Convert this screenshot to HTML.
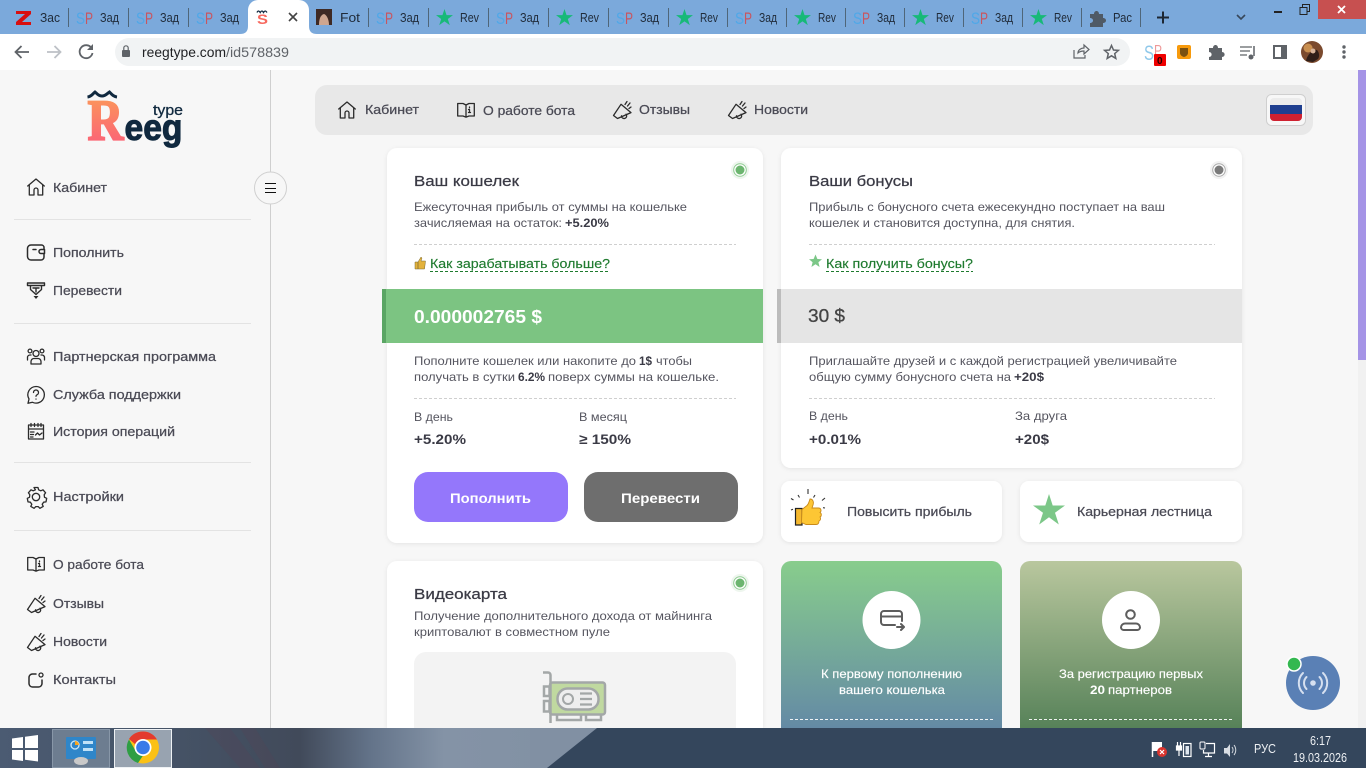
<!DOCTYPE html>
<html lang="ru">
<head>
<meta charset="utf-8">
<title>Reegtype</title>
<style>
html,body{margin:0;padding:0;width:1366px;height:768px;overflow:hidden;background:#f7f7f7}
svg{display:block}
text{font-family:"Liberation Sans","DejaVu Sans",sans-serif}
.s{font-size:13px;fill:#4a4a55;stroke:#4a4a55;stroke-width:.25}
.h{font-size:15px;fill:#3a3a45;stroke:#3a3a45;stroke-width:.25}
.p{font-size:12px;fill:#55555f}
.b{font-size:12px;font-weight:700;fill:#3a3a45}
.v{font-size:14px;font-weight:700;fill:#3a3a45}
.l{font-size:13px;fill:#1e7a2e;stroke:#1e7a2e;stroke-width:.15}
.t{font-size:13px;fill:#1f2a38}
.w{font-size:12px;fill:#fff;stroke:#fff;stroke-width:.15}
.i{fill:none;stroke:#2b2b2b;stroke-width:1.3;stroke-linecap:round;stroke-linejoin:round}
.sp1{font-size:17px;fill:#4fa8e8}
.sp2{font-size:17px;fill:#c8555f}
</style>
</head>
<body>
<svg width="1366" height="768" viewBox="0 0 1366 768" xmlns="http://www.w3.org/2000/svg">
<defs>
<linearGradient id="lg" x1="0" y1="0" x2="0" y2="1"><stop offset="0" stop-color="#fba055"/><stop offset="1" stop-color="#fb5a7c"/></linearGradient>
<linearGradient id="g1" x1="0" y1="0" x2="0" y2="1"><stop offset="0" stop-color="#88cd8c"/><stop offset="1" stop-color="#648aa5"/></linearGradient>
<linearGradient id="g2" x1="0" y1="0" x2="0" y2="1"><stop offset="0" stop-color="#b9c79e"/><stop offset="1" stop-color="#578259"/></linearGradient>
<linearGradient id="tb" x1="0" y1="0" x2="1" y2="0"><stop offset="0" stop-color="#4b5b72"/><stop offset=".25" stop-color="#465468"/><stop offset=".5" stop-color="#414a5a"/><stop offset=".62" stop-color="#64748a"/><stop offset=".74" stop-color="#8493a6"/><stop offset="1" stop-color="#8190a3"/></linearGradient>
<filter id="sh" x="-5%" y="-5%" width="110%" height="110%"><feDropShadow dx="0" dy="1" stdDeviation="2" flood-color="#000" flood-opacity=".08"/></filter>
<symbol id="home" viewBox="0 0 18 18" overflow="visible"><path class="i" d="M.7 8 9 1l8.300 7M2.300 7v10H7v-5a2 2 0 0 1 4 0v5h4.700V7"/></symbol>
<symbol id="book" viewBox="0 0 18 18" overflow="visible"><path class="i" d="M.7 2.500h5.300l3 1.500 3-1.500h5.300V15H12l-3 1.200L6 15H.7zM9 4v12M12.500 6v.8M11.500 8.500h1v3M11.500 11.500h2"/></symbol>
<symbol id="horn" viewBox="0 0 18 18" overflow="visible"><path class="i" d="M8 3.300 18 11.600 4.500 17.500.5 14.500zM8.500 14.800a2.600 2.600 0 1 0 4.500-1.600M14 .5l-2 3M17 2l-2.500 3M18 6l-2 1.500"/></symbol>
<symbol id="star" viewBox="0 0 20 20"><path d="M10 0l2.400 7.200H20l-6.100 4.500 2.300 7.300L10 14.500 3.800 19l2.300-7.300L0 7.200h7.600z" fill="#17b978"/></symbol>
</defs>

<!-- page background -->
<rect width="1366" height="768" fill="#f7f7f7"/>

<!-- browser tab strip -->
<rect width="1366" height="34" fill="#7ba9db"/>
<rect y="34" width="1366" height="36" fill="#fff"/>
<g stroke="#4f6679" stroke-width="1"><path d="M68.500 8v19M128.500 8v19M188.500 8v19M368.500 8v19M428.500 8v19M488.500 8v19M548.500 8v19M608.500 8v19M668.500 8v19M727.500 8v19M786.500 8v19M845.500 8v19M904.500 8v19M963.500 8v19M1022.500 8v19M1081.500 8v19M1140.500 8v19"/></g>
<path d="M16 11h15v3l-9 8h9v3H16v-3l9-8h-9z" fill="#d80f10"/>
<path d="M240 34c5 0 8-2 8-8V10a10 10 0 0 1 10-10h41a10 10 0 0 1 10 10v16c0 6 3 8 8 8z" fill="#fff"/>
<g>
<text class="sp1" x="76" y="24" textLength="9" lengthAdjust="spacingAndGlyphs">S</text><text class="sp2" x="85" y="24" textLength="8" lengthAdjust="spacingAndGlyphs">P</text>
<text class="sp1" x="136" y="24" textLength="9" lengthAdjust="spacingAndGlyphs">S</text><text class="sp2" x="145" y="24" textLength="8" lengthAdjust="spacingAndGlyphs">P</text>
<text class="sp1" x="196" y="24" textLength="9" lengthAdjust="spacingAndGlyphs">S</text><text class="sp2" x="205" y="24" textLength="8" lengthAdjust="spacingAndGlyphs">P</text>
<text class="sp1" x="376" y="24" textLength="9" lengthAdjust="spacingAndGlyphs">S</text><text class="sp2" x="385" y="24" textLength="8" lengthAdjust="spacingAndGlyphs">P</text>
<text class="sp1" x="496" y="24" textLength="9" lengthAdjust="spacingAndGlyphs">S</text><text class="sp2" x="505" y="24" textLength="8" lengthAdjust="spacingAndGlyphs">P</text>
<text class="sp1" x="616" y="24" textLength="9" lengthAdjust="spacingAndGlyphs">S</text><text class="sp2" x="625" y="24" textLength="8" lengthAdjust="spacingAndGlyphs">P</text>
<text class="sp1" x="735" y="24" textLength="9" lengthAdjust="spacingAndGlyphs">S</text><text class="sp2" x="744" y="24" textLength="8" lengthAdjust="spacingAndGlyphs">P</text>
<text class="sp1" x="853" y="24" textLength="9" lengthAdjust="spacingAndGlyphs">S</text><text class="sp2" x="862" y="24" textLength="8" lengthAdjust="spacingAndGlyphs">P</text>
<text class="sp1" x="971" y="24" textLength="9" lengthAdjust="spacingAndGlyphs">S</text><text class="sp2" x="980" y="24" textLength="8" lengthAdjust="spacingAndGlyphs">P</text>
</g>
<use href="#star" x="436" y="9" width="17" height="17"/>
<use href="#star" x="556" y="9" width="17" height="17"/>
<use href="#star" x="676" y="9" width="17" height="17"/>
<use href="#star" x="794" y="9" width="17" height="17"/>
<use href="#star" x="912" y="9" width="17" height="17"/>
<use href="#star" x="1030" y="9" width="17" height="17"/>
<g class="tabs">
<text class="t" x="40" y="22" textLength="20" lengthAdjust="spacingAndGlyphs">Зас</text>
<text class="t" x="100" y="22" textLength="19" lengthAdjust="spacingAndGlyphs">Зад</text>
<text class="t" x="160" y="22" textLength="19" lengthAdjust="spacingAndGlyphs">Зад</text>
<text class="t" x="220" y="22" textLength="19" lengthAdjust="spacingAndGlyphs">Зад</text>
<text class="t" x="340" y="22" textLength="20" lengthAdjust="spacingAndGlyphs">Fot</text>
<text class="t" x="400" y="22" textLength="19" lengthAdjust="spacingAndGlyphs">Зад</text>
<text class="t" x="460" y="22" textLength="19" lengthAdjust="spacingAndGlyphs">Rev</text>
<text class="t" x="520" y="22" textLength="19" lengthAdjust="spacingAndGlyphs">Зад</text>
<text class="t" x="580" y="22" textLength="19" lengthAdjust="spacingAndGlyphs">Rev</text>
<text class="t" x="640" y="22" textLength="19" lengthAdjust="spacingAndGlyphs">Зад</text>
<text class="t" x="700" y="22" textLength="18" lengthAdjust="spacingAndGlyphs">Rev</text>
<text class="t" x="759" y="22" textLength="18" lengthAdjust="spacingAndGlyphs">Зад</text>
<text class="t" x="818" y="22" textLength="18" lengthAdjust="spacingAndGlyphs">Rev</text>
<text class="t" x="877" y="22" textLength="18" lengthAdjust="spacingAndGlyphs">Зад</text>
<text class="t" x="936" y="22" textLength="18" lengthAdjust="spacingAndGlyphs">Rev</text>
<text class="t" x="995" y="22" textLength="18" lengthAdjust="spacingAndGlyphs">Зад</text>
<text class="t" x="1054" y="22" textLength="18" lengthAdjust="spacingAndGlyphs">Rev</text>
<text class="t" x="1113" y="22" textLength="19" lengthAdjust="spacingAndGlyphs">Рас</text>
</g>
<!-- active tab favicon and close -->
<path d="M257 12.500c1-2 2-2 3.200 0 1.200-2 2.200-2 3.300 0 1.200-2 2.200-2 3.500 0" fill="none" stroke="#10293f" stroke-width="1.300"/>
<text x="257" y="24" font-size="14" font-weight="700" fill="#f7695f" textLength="11" lengthAdjust="spacingAndGlyphs">S</text>
<path d="M289 13l8 8M297 13l-8 8" stroke="#444" stroke-width="1.600"/>
<!-- photo favicon -->
<rect x="316" y="9" width="16" height="16" fill="#3f2a24"/><path d="M319 25c0-5 1-10 5-11 3 1 5 6 5 11z" fill="#cfa68f"/>
<!-- puzzle tab -->
<path d="M1090 14h4c0-4 5-4 5 0h4v4c4 0 4 5 0 5v4h-13v-4c4 0 4-5 0-5z" fill="#4f5a66"/>
<!-- window controls -->
<path d="M1157 17.500h12M1163 11.500v12" stroke="#1d2733" stroke-width="2"/>
<path d="M1237 15l4 4 4-4" fill="none" stroke="#37475a" stroke-width="1.600"/>
<rect x="1274" y="11" width="8" height="2" fill="#222"/>
<path d="M1300 7.500h7v7h-7zM1302.500 7V4.500h7v7H1307" fill="none" stroke="#222" stroke-width="1"/>
<rect x="1318" width="48" height="19" fill="#c75050"/>
<path d="M1338 6l7 7M1345 6l-7 7" stroke="#fff" stroke-width="1.800"/>

<!-- toolbar -->
<path d="M29 52H16M21.500 46 15.500 52l6 6" fill="none" stroke="#5f6368" stroke-width="1.800"/>
<path d="M47 52h13M54.500 46l6 6-6 6" fill="none" stroke="#bdc1c6" stroke-width="1.800"/>
<path d="M91.500 48a6.500 6.500 0 1 0 1 5" fill="none" stroke="#5f6368" stroke-width="1.800"/><path d="M93 44v6h-6z" fill="#5f6368"/>
<rect x="115" y="38" width="1015" height="28" rx="14" fill="#f1f3f4"/>
<rect x="122" y="50" width="8" height="7" rx="1" fill="#5f6368"/><path d="M123.800 50v-2a2.200 2.200 0 0 1 4.400 0v2" fill="none" stroke="#5f6368" stroke-width="1.200"/>
<text x="142" y="57" font-size="14" fill="#202124" textLength="84" lengthAdjust="spacingAndGlyphs">reegtype.com</text>
<text x="226" y="57" font-size="14" fill="#5f6368" textLength="63" lengthAdjust="spacingAndGlyphs">/id578839</text>
<path d="M1074 50v8h11v-3M1078 53c0-3 3-5 6-5v-3l5 4.500-5 4.500v-3c-2.500 0-4.500 .5-6 2z" fill="none" stroke="#5f6368" stroke-width="1.200"/>
<path d="M1111.500 45.500l2 4.500 4.900.4-3.700 3.200 1.100 4.800-4.300-2.600-4.300 2.600 1.100-4.800-3.700-3.200 4.900-.4z" fill="none" stroke="#5f6368" stroke-width="1.500"/>
<text x="1144" y="60" font-size="21" fill="#8fc8ea" textLength="10" lengthAdjust="spacingAndGlyphs">S</text><text x="1154" y="56" font-size="16" fill="#e99" textLength="8" lengthAdjust="spacingAndGlyphs">P</text>
<rect x="1154" y="54" width="12" height="12" rx="1" fill="#f00000"/><text x="1157" y="64" font-size="10" fill="#220000" font-weight="700">0</text>
<rect x="1177" y="45" width="14" height="14" rx="2" fill="#f79a0c"/><path d="M1180 48h8v5c0 2-2 3.500-4 4-2-.5-4-2-4-4z" fill="#7a5010"/>
<path d="M1209 48h4c0-4 5-4 5 0h4v4c3.500 0 3.500 5 0 5v3h-13v-3c3.500 0 3.500-5 0-5z" fill="#5f6368"/>
<path d="M1240 47h12M1240 51h10M1240 55h7" stroke="#5f6368" stroke-width="1.300"/><path d="M1254 46v10" stroke="#5f6368" stroke-width="1.500"/><circle cx="1251" cy="57" r="2.500" fill="#5f6368"/>
<rect x="1274" y="46" width="12" height="12" fill="none" stroke="#5f6368" stroke-width="2"/><rect x="1281" y="46" width="6" height="12" fill="#5f6368"/>
<circle cx="1312" cy="52" r="11" fill="#7b4a2e"/><circle cx="1308" cy="48" r="4.500" fill="#c98f50"/><path d="M1306 61c1-7 8-12 11-11 2 2 3 6 1 9l-5 3z" fill="#2f1e18"/><circle cx="1313" cy="51" r="2.500" fill="#d8b49a"/>
<g fill="#5f6368"><circle cx="1344" cy="47" r="1.700"/><circle cx="1344" cy="52" r="1.700"/><circle cx="1344" cy="57" r="1.700"/></g>

<!-- sidebar -->
<rect x="270" y="70" width="1" height="658" fill="#cfcfcf"/>
<path d="M87.500 97c4-.5 5-3 7.500-5 2.500 2 3.500 4 7 4 3.500 0 4.500-2 7.500-4 2 2 3.500 4.500 7.500 5" fill="none" stroke="#10293f" stroke-width="3"/>
<text x="87.500" y="139.500" font-size="58" font-weight="700" fill="url(#lg)" stroke="url(#lg)" stroke-width="1.800" textLength="36" lengthAdjust="spacingAndGlyphs" style="font-family:'Liberation Serif',serif">R</text>
<text x="124.500" y="140" font-size="37" font-weight="700" fill="#10293f" stroke="#10293f" stroke-width="1" textLength="58" lengthAdjust="spacingAndGlyphs">eeg</text>
<text x="153" y="115" font-size="15" fill="#10293f" stroke="#10293f" stroke-width=".3" textLength="30" lengthAdjust="spacingAndGlyphs">type</text>

<use href="#home" x="27" y="178" width="18" height="18"/>
<text class="s" x="53" y="192" textLength="54" lengthAdjust="spacingAndGlyphs">Кабинет</text>
<circle cx="270.500" cy="188" r="16" fill="#f7f7f7" stroke="#d0d0d0"/>
<path d="M265 183.500h11M265 188.500h11M265 192.500h11" stroke="#111" stroke-width="1"/>
<g fill="#e3e3e3"><rect x="14" y="219" width="237" height="1"/><rect x="14" y="323" width="237" height="1"/><rect x="14" y="462" width="237" height="1"/><rect x="14" y="530" width="237" height="1"/></g>

<path class="i" style="stroke-width:1.500" d="M44 249v-1.500a2.500 2.500 0 0 0-2.500-2.500H31a3.500 3.500 0 0 0-3.500 3.500v8a3.500 3.500 0 0 0 3.500 3.500h10a3 3 0 0 0 3-3v-3M33 249.500h3M44.500 249.500H41a2 2 0 0 0 0 4h3.500z"/>
<text class="s" x="53" y="257" textLength="71" lengthAdjust="spacingAndGlyphs">Пополнить</text>
<path class="i" style="stroke-width:1.400" d="M27.500 283h17v2.500h-17zM30.500 285.500v4l5.500 5 5.500-5v-4M33 288h6M36 288v4"/><path d="M33.500 296h5l-2.500 3z" fill="#2b2b2b"/>
<text class="s" x="53" y="295" textLength="69" lengthAdjust="spacingAndGlyphs">Перевести</text>
<circle class="i" cx="36" cy="353.500" r="3"/><circle class="i" cx="30" cy="351" r="1.900"/><circle class="i" cx="42" cy="351" r="1.900"/>
<path class="i" d="M31 364v-2.500a3 3 0 0 1 3-3h4a3 3 0 0 1 3 3V364zM27.500 360v-2.500A2.500 2.500 0 0 1 30 355h1M44.500 360v-2.500A2.500 2.500 0 0 0 42 355h-1"/>
<text class="s" x="53" y="361" textLength="163" lengthAdjust="spacingAndGlyphs">Партнерская программа</text>
<path class="i" d="M36 386.500a8.300 8.300 0 1 1-3.500 15.800l-4.500 1 1-4.300a8.300 8.300 0 0 1 7-12.500z"/><path class="i" d="M33.500 392.500a2.500 2.500 0 1 1 3.500 2.300c-.7.400-1 .8-1 1.500M36 399v.1"/>
<text class="s" x="53" y="399" textLength="128" lengthAdjust="spacingAndGlyphs">Служба поддержки</text>
<path class="i" d="M28.500 425h15v14h-15zM28.500 429h15M31 423.500v3M34.500 423.500v3M38 423.500v3M41 423.500v3M30.500 432h3.500M30.500 434.500h3M30.500 437h2.500M35.500 435l2-2 2 2 2.500-2"/>
<text class="s" x="53" y="436" textLength="122" lengthAdjust="spacingAndGlyphs">История операций</text>
<path class="i" d="M34 488h4l.6 2.300 2.200 1 2.200-1 2.600 3-1.400 2 .3 2.500 2.200 1-.7 3.600-2.400.3-1.400 2 1 2.200-3.300 1.900-1.700-1.700h-2.400l-1.700 1.700-3.300-1.900 1-2.200-1.400-2-2.400-.3-.7-3.600 2.200-1 .3-2.500-1.400-2 2.600-3 2.200 1 2.200-1z" transform="translate(0 -.5)"/><circle class="i" cx="36" cy="497" r="3.700"/>
<text class="s" x="53" y="501" textLength="71" lengthAdjust="spacingAndGlyphs">Настройки</text>
<use href="#book" x="27" y="555" width="18" height="18"/>
<text class="s" x="53" y="569" textLength="91" lengthAdjust="spacingAndGlyphs">О работе бота</text>
<use href="#horn" x="27" y="595" width="18" height="18"/>
<text class="s" x="53" y="608" textLength="51" lengthAdjust="spacingAndGlyphs">Отзывы</text>
<use href="#horn" x="27" y="633" width="18" height="18"/>
<text class="s" x="53" y="646" textLength="54" lengthAdjust="spacingAndGlyphs">Новости</text>
<path class="i" style="stroke-width:1.500" d="M36 674h-3.500a3.500 3.500 0 0 0-3.500 3.500v6a3.500 3.500 0 0 0 3.500 3.500h6a3.500 3.500 0 0 0 3.500-3.500V680"/><circle class="i" cx="41" cy="675" r="2"/>
<text class="s" x="53" y="684" textLength="63" lengthAdjust="spacingAndGlyphs">Контакты</text>

<!-- top nav -->
<rect x="315" y="85" width="998" height="50" rx="12" fill="#e8e8e8"/>
<use href="#home" x="338" y="101" width="18" height="18"/>
<text class="s" x="365" y="114" textLength="54" lengthAdjust="spacingAndGlyphs">Кабинет</text>
<use href="#book" x="457" y="101" width="18" height="18"/>
<text class="s" x="483" y="115" textLength="92" lengthAdjust="spacingAndGlyphs">О работе бота</text>
<use href="#horn" x="613" y="101" width="18" height="18"/>
<text class="s" x="639" y="114" textLength="51" lengthAdjust="spacingAndGlyphs">Отзывы</text>
<use href="#horn" x="728" y="101" width="18" height="18"/>
<text class="s" x="754" y="114" textLength="54" lengthAdjust="spacingAndGlyphs">Новости</text>
<rect x="1266.500" y="94.500" width="39" height="31" rx="5" fill="#f7f7f7" stroke="#cfcfcf"/>
<rect x="1270" y="98" width="32" height="23" rx="4" fill="#ececec"/>
<rect x="1270" y="105" width="32" height="9" fill="#1f3f8f"/>
<path d="M1270 114h32v3a4 4 0 0 1-4 4h-24a4 4 0 0 1-4-4z" fill="#cf2130"/>

<!-- wallet card -->
<rect x="387" y="148" width="376" height="395" rx="10" fill="#fff" filter="url(#sh)"/>
<circle cx="740" cy="170" r="9" fill="#eef6ee"/><circle cx="740" cy="170" r="6.300" fill="#fff" stroke="#8fcc92"/><circle cx="740" cy="170" r="4.500" fill="#6cb56f"/>
<text class="h" x="414" y="186" textLength="105" lengthAdjust="spacingAndGlyphs">Ваш кошелек</text>
<text class="p" x="414" y="211" textLength="273" lengthAdjust="spacingAndGlyphs">Ежесуточная прибыль от суммы на кошельке</text>
<text class="p" x="414" y="227" textLength="148" lengthAdjust="spacingAndGlyphs">зачисляемая на остаток:</text>
<text class="b" x="565" y="227" textLength="44" lengthAdjust="spacingAndGlyphs">+5.20%</text>
<path d="M414 244.500h322" stroke="#cfcfcf" stroke-dasharray="3 2"/>
<path d="M415 262h3v7h-3zM418 262l3-5 1 1-1 3h4.500l-1 8H418z" fill="#e3b23c" stroke="#7a6a30" stroke-width=".5"/>
<text class="l" x="430" y="268" textLength="180" lengthAdjust="spacingAndGlyphs">Как зарабатывать больше?</text>
<path d="M430 271.500h180" stroke="#1e7a2e" stroke-dasharray="3 2"/>
<rect x="382" y="289" width="381" height="54" fill="#7cc482"/><rect x="382" y="289" width="4" height="54" fill="#5aa564"/>
<text x="414" y="323" font-size="18" font-weight="700" fill="#fff" textLength="128" lengthAdjust="spacingAndGlyphs">0.000002765 $</text>
<text class="p" x="414" y="365" textLength="222" lengthAdjust="spacingAndGlyphs">Пополните кошелек или накопите до</text>
<text class="b" x="639" y="365" textLength="13" lengthAdjust="spacingAndGlyphs">1$</text>
<text class="p" x="656" y="365" textLength="36" lengthAdjust="spacingAndGlyphs">чтобы</text>
<text class="p" x="414" y="381" textLength="101" lengthAdjust="spacingAndGlyphs">получать в сутки</text>
<text class="b" x="518" y="381" textLength="27" lengthAdjust="spacingAndGlyphs">6.2%</text>
<text class="p" x="548" y="381" textLength="171" lengthAdjust="spacingAndGlyphs">поверх суммы на кошельке.</text>
<path d="M414 398.500h322" stroke="#cfcfcf" stroke-dasharray="3 2"/>
<text class="p" x="414" y="421" textLength="39" lengthAdjust="spacingAndGlyphs">В день</text>
<text class="p" x="579" y="421" textLength="48" lengthAdjust="spacingAndGlyphs">В месяц</text>
<text class="v" x="414" y="444" textLength="52" lengthAdjust="spacingAndGlyphs">+5.20%</text>
<text class="v" x="579" y="444" textLength="52" lengthAdjust="spacingAndGlyphs">≥ 150%</text>
<rect x="414" y="472" width="154" height="50" rx="14" fill="#9477fb"/>
<rect x="584" y="472" width="154" height="50" rx="14" fill="#6e6e6e"/>
<text x="450" y="503" font-size="14" font-weight="700" fill="#fff" textLength="81" lengthAdjust="spacingAndGlyphs">Пополнить</text>
<text x="621" y="503" font-size="14" font-weight="700" fill="#fff" textLength="79" lengthAdjust="spacingAndGlyphs">Перевести</text>

<!-- bonus card -->
<rect x="781" y="148" width="461" height="320" rx="10" fill="#fff" filter="url(#sh)"/>
<circle cx="1219" cy="170" r="9" fill="#f2f2f2"/><circle cx="1219" cy="170" r="6.300" fill="#fff" stroke="#aaa"/><circle cx="1219" cy="170" r="4.500" fill="#7a7a7a"/>
<text class="h" x="809" y="186" textLength="104" lengthAdjust="spacingAndGlyphs">Ваши бонусы</text>
<text class="p" x="809" y="211" textLength="356" lengthAdjust="spacingAndGlyphs">Прибыль с бонусного счета ежесекундно поступает на ваш</text>
<text class="p" x="809" y="227" textLength="266" lengthAdjust="spacingAndGlyphs">кошелек и становится доступна, для снятия.</text>
<path d="M809 244.500h406" stroke="#cfcfcf" stroke-dasharray="3 2"/>
<path d="M815.500 254.500l1.900 4.500 4.600.2-3.600 3 1.200 4.800-4.100-2.700-4.100 2.700 1.200-4.800-3.600-3 4.600-.2z" fill="#7cc788"/>
<text class="l" x="826" y="268" textLength="147" lengthAdjust="spacingAndGlyphs">Как получить бонусы?</text>
<path d="M826 271.500h147" stroke="#1e7a2e" stroke-dasharray="3 2"/>
<rect x="777" y="289" width="465" height="54" fill="#e5e5e5"/><rect x="777" y="289" width="4" height="54" fill="#bcbcbc"/>
<text x="808" y="322" font-size="18" fill="#444" stroke="#444" stroke-width=".3" textLength="37" lengthAdjust="spacingAndGlyphs">30 $</text>
<text class="p" x="809" y="365" textLength="368" lengthAdjust="spacingAndGlyphs">Приглашайте друзей и с каждой регистрацией увеличивайте</text>
<text class="p" x="809" y="381" textLength="202" lengthAdjust="spacingAndGlyphs">общую сумму бонусного счета на</text>
<text class="b" x="1014" y="381" textLength="30" lengthAdjust="spacingAndGlyphs">+20$</text>
<path d="M809 398.500h406" stroke="#cfcfcf" stroke-dasharray="3 2"/>
<text class="p" x="809" y="420" textLength="39" lengthAdjust="spacingAndGlyphs">В день</text>
<text class="p" x="1015" y="420" textLength="52" lengthAdjust="spacingAndGlyphs">За друга</text>
<text class="v" x="809" y="444" textLength="52" lengthAdjust="spacingAndGlyphs">+0.01%</text>
<text class="v" x="1015" y="444" textLength="34" lengthAdjust="spacingAndGlyphs">+20$</text>

<!-- small cards -->
<rect x="781" y="481" width="221" height="61" rx="9" fill="#fff" filter="url(#sh)"/>
<rect x="1020" y="481" width="222" height="61" rx="9" fill="#fff" filter="url(#sh)"/>
<path d="M795.500 508.500h6.500v16.500h-6.500z" fill="#f5b82e" stroke="#222" stroke-width="1.200"/>
<path d="M802 509.500l5-4c2-2 2-4 3-6.500 3 0 4 3 3 6l-1 3h6.500c3 0 3 3.500 1.500 4.500 2 1 1.500 4 0 4.500 1 1.500.5 3.500-1 4 0 2-1 3.500-3 3.500h-10l-4.500-2z" fill="#fdc634" stroke="#c98a1a" stroke-width=".9"/>
<path d="M808 489v5M798 495l1.500 2.500M791 498.500l2.500 1.500M815 495l-1.500 2.500M825 498l-3 2.500M791 510l2-.8M825 508l-2-.3" stroke="#333" stroke-width="1.100"/>
<text class="s" x="847" y="516" textLength="125" lengthAdjust="spacingAndGlyphs">Повысить прибыль</text>
<path d="M1049 494l3.700 11.500h12.300l-10 7.200 3.800 11.800-9.800-7.300-9.800 7.300 3.800-11.800-10-7.200h12.300z" fill="#7cc788"/>
<text class="s" x="1077" y="516" textLength="135" lengthAdjust="spacingAndGlyphs">Карьерная лестница</text>

<!-- gradient cards -->
<path d="M781 728V571a10 10 0 0 1 10-10h201a10 10 0 0 1 10 10v157z" fill="url(#g1)"/>
<path d="M1020 728V571a10 10 0 0 1 10-10h202a10 10 0 0 1 10 10v157z" fill="url(#g2)"/>
<circle cx="891.500" cy="620" r="29" fill="#fff"/>
<circle cx="1131" cy="620" r="29" fill="#fff"/>
<path d="M902 621v-7a3 3 0 0 0-3-3h-15a3 3 0 0 0-3 3v8a3 3 0 0 0 3 3h11M881 616.500h21M897 627h6.500M901 624l3 3-3 3" fill="none" stroke="#5d5d5d" stroke-width="2" stroke-linecap="round" stroke-linejoin="round"/>
<circle cx="1130.500" cy="614.500" r="4.300" fill="none" stroke="#5d5d5d" stroke-width="2"/>
<path d="M1125 623.500h11a4 4 0 0 1 4 4 2.800 2.800 0 0 1-3 2.500h-13a2.800 2.800 0 0 1-3-2.500 4 4 0 0 1 4-4z" fill="none" stroke="#5d5d5d" stroke-width="2"/>
<text class="w" x="821" y="678" textLength="141" lengthAdjust="spacingAndGlyphs">К первому пополнению</text>
<text class="w" x="839" y="694" textLength="106" lengthAdjust="spacingAndGlyphs">вашего кошелька</text>
<text class="w" x="1059" y="678" textLength="144" lengthAdjust="spacingAndGlyphs">За регистрацию первых</text>
<text x="1090" y="694" font-size="12" font-weight="700" fill="#fff" textLength="15" lengthAdjust="spacingAndGlyphs">20</text>
<text class="w" x="1108" y="694" textLength="64" lengthAdjust="spacingAndGlyphs">партнеров</text>
<path d="M790 719.500h203M1029 719.500h204" stroke="#fff" stroke-dasharray="3 2" opacity=".9"/>

<!-- video card -->
<path d="M387 728V571a10 10 0 0 1 10-10h356a10 10 0 0 1 10 10v157z" fill="#fff" filter="url(#sh)"/>
<circle cx="740" cy="583" r="9" fill="#eef6ee"/><circle cx="740" cy="583" r="6.300" fill="#fff" stroke="#8fcc92"/><circle cx="740" cy="583" r="4.500" fill="#6cb56f"/>
<text class="h" x="414" y="599" textLength="93" lengthAdjust="spacingAndGlyphs">Видеокарта</text>
<text class="p" x="414" y="620" textLength="298" lengthAdjust="spacingAndGlyphs">Получение дополнительного дохода от майнинга</text>
<text class="p" x="414" y="636" textLength="196" lengthAdjust="spacingAndGlyphs">криптовалют в совместном пуле</text>
<path d="M414 728V664a12 12 0 0 1 12-12h298a12 12 0 0 1 12 12v64z" fill="#f3f3f3"/>
<rect x="550" y="682.500" width="55" height="32" rx="2.500" fill="#c0d9a0" stroke="#a3a7a7" stroke-width="2.500"/>
<path d="M543 672.500h5a2.500 2.500 0 0 1 2.500 2.500v48M544 686.500h5.500v9.500H544zM544 701h5.500v10.500H544zM557 715v5h24v-5M586 715v5h15v-5" fill="none" stroke="#a3a7a7" stroke-width="2.500"/>
<rect x="557.500" y="688.500" width="41" height="21" rx="10" fill="#eeeeee" stroke="#a3a7a7" stroke-width="2.500"/>
<circle cx="568" cy="699" r="5" fill="#eeeeee" stroke="#a3a7a7" stroke-width="2"/>
<path d="M580 693.500h12M580 699h12M580 704.500h12" stroke="#a3a7a7" stroke-width="2.200"/>

<!-- floating button -->
<circle cx="1313" cy="683" r="27" fill="#5a80b5"/>
<circle cx="1313" cy="683" r="2.800" fill="#d6e0f0"/>
<path d="M1306.500 677a8.500 8.500 0 0 0 0 12M1319.500 677a8.500 8.500 0 0 1 0 12M1303 673a14 14 0 0 0 0 20M1323 673a14 14 0 0 1 0 20" fill="none" stroke="#d6e0f0" stroke-width="2" stroke-linecap="round"/>
<circle cx="1294" cy="664" r="7" fill="#34b850" stroke="#fff" stroke-width="1.500"/>

<!-- scrollbar -->
<rect x="1358" y="70" width="8" height="658" fill="#f1f1f1"/>
<rect x="1358" y="70" width="8" height="290" fill="#a594e6"/>

<!-- taskbar -->
<rect y="728" width="600" height="40" fill="url(#tb)"/>
<rect x="540" y="728" width="826" height="40" fill="#34465c"/>
<path d="M530 728h67l-50 40h-17z" fill="#8190a3"/>
<path d="M205 728l35 40h20l-30-40zM240 728l25 40h15l-25-40z" fill="#5a4250" opacity=".22"/>
<path d="M12 738.500 23 737v11H12zM25 736.700 38 735v13H25zM12 750h11v11l-11-1.500zM25 750h13v11.500l-13-1.700z" fill="#fff"/>
<rect x="52.500" y="729.500" width="57" height="38" fill="#6d7d90" stroke="#8897a8"/>
<rect x="66" y="737" width="30" height="22" rx="1" fill="#2f86c9"/>
<circle cx="75" cy="745" r="4" fill="none" stroke="#cde8fa" stroke-width="1.300"/><path d="M75 741a4 4 0 0 1 4 4h-4z" fill="#f7a41e"/>
<rect x="83" y="741" width="10" height="3" fill="#bfe1f7"/><rect x="83" y="748" width="10" height="3" fill="#bfe1f7"/>
<ellipse cx="81" cy="761" rx="7" ry="4" fill="#c9c9c9"/>
<rect x="114.500" y="729.500" width="57" height="38" fill="#98a3b0" stroke="#eef1f4"/>
<circle cx="143" cy="747.500" r="16" fill="#fbc116"/>
<path d="M143 731.500a16 16 0 0 1 14 8h-14a8 8 0 0 0-7.500 5l-6.500-5.500A16 16 0 0 1 143 731.500z" fill="#e33b2e"/>
<path d="M129 739.500l7 12a8 8 0 0 0 7 4l-5 7.500A16 16 0 0 1 129 739.500z" fill="#2f9e44"/>
<circle cx="143" cy="747.500" r="8.500" fill="#fff"/><circle cx="143" cy="747.500" r="6.800" fill="#3a7be8"/>

<!-- tray -->
<path d="M1152.500 742v15" stroke="#fff" stroke-width="1.500"/><path d="M1153 742h9v9h-9z" fill="#fff"/>
<circle cx="1162" cy="752" r="5" fill="#d9342e"/><path d="M1160 750l4 4M1164 750l-4 4" stroke="#fff" stroke-width="1.200"/>
<rect x="1183.500" y="743.500" width="7.500" height="13" fill="none" stroke="#fff" stroke-width="1.200"/><rect x="1185.500" y="746" width="3.500" height="8.500" fill="#dfe6ee"/>
<path d="M1177.500 742v4M1180.500 742v4M1176.500 746h5v4h-5zM1179 750v6" stroke="#fff" stroke-width="1.200" fill="#fff"/>
<rect x="1200" y="742" width="5" height="7" rx="1" fill="none" stroke="#fff"/><path d="M1206 743.500h8.500v9.500h-11v-3M1208.500 753v3M1205 756.500h7" fill="none" stroke="#fff" stroke-width="1.200"/>
<path d="M1224 748h3l3-4v13l-3-3.500h-3z" fill="#d8dde3"/><path d="M1232 747a5 5 0 0 1 0 6M1234 745a8 8 0 0 1 0 10" fill="none" stroke="#d8dde3" stroke-width="1"/>
<text x="1254" y="753" font-size="13" fill="#eef1f4" textLength="22" lengthAdjust="spacingAndGlyphs">РУС</text>
<text x="1310" y="745" font-size="13" fill="#eef1f4" textLength="21" lengthAdjust="spacingAndGlyphs">6:17</text>
<text x="1293" y="762" font-size="13" fill="#eef1f4" textLength="54" lengthAdjust="spacingAndGlyphs">19.03.2026</text>
</svg>
</body>
</html>
